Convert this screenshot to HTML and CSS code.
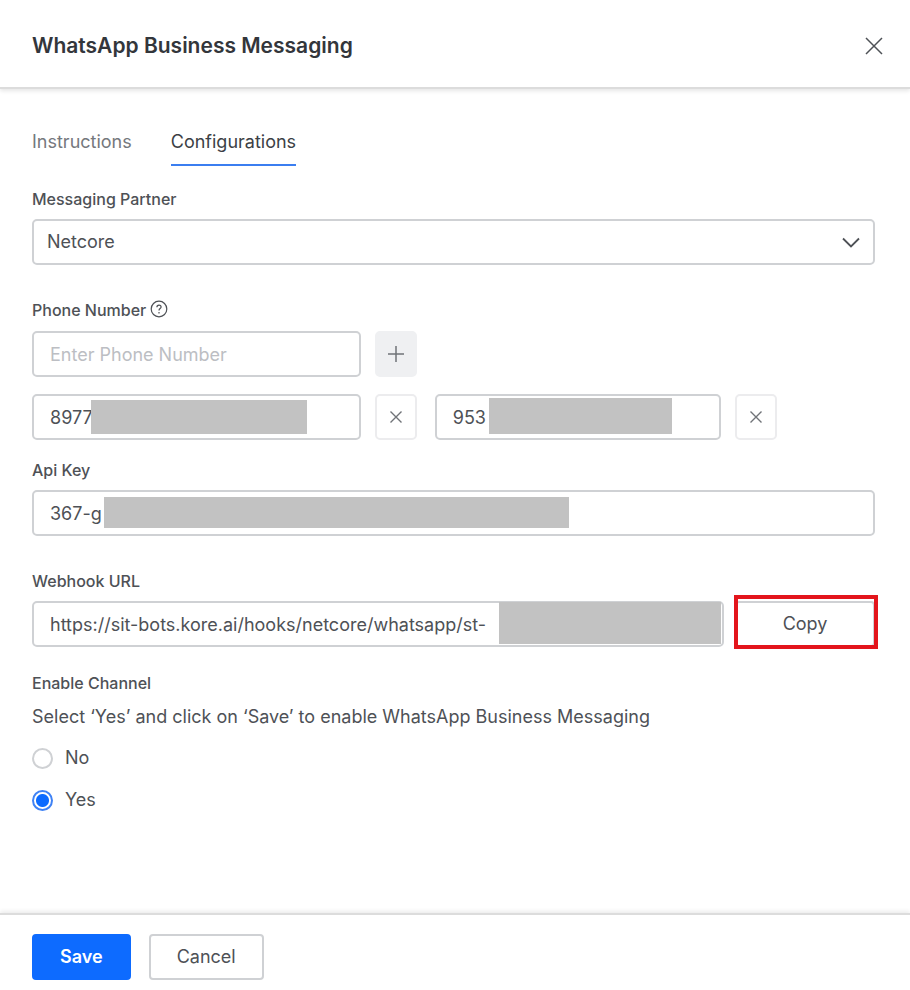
FILE: index.html
```
<!DOCTYPE html>
<html lang="en">
<head>
  <meta charset="UTF-8">
  <meta name="viewport" content="width=device-width, initial-scale=1.0">
  <title>WhatsApp Business Messaging</title>
  <link rel="stylesheet" href="styles.css">
</head>
<body>
  <div class="panel">
    <header class="header">
      <h1 class="title">WhatsApp Business Messaging</h1>
      <button class="close" type="button" aria-label="Close">
        <svg width="18" height="18" viewBox="0 0 18 18" fill="none" stroke="currentColor" stroke-width="1.5">
          <path d="M1 1l16 16M17 1L1 17"/>
        </svg>
      </button>
    </header>

    <main class="content">
      <nav class="tabs">
        <a class="tab" href="#instructions">Instructions</a>
        <a class="tab active" href="#configurations">Configurations</a>
      </nav>

      <div class="group">
        <label class="label" for="partner">Messaging Partner</label>
        <div class="field">
          <select class="input select" id="partner">
            <option>Netcore</option>
          </select>
          <svg class="chevron" width="18" height="12" viewBox="0 0 18 12" fill="none" stroke="currentColor" stroke-width="1.8">
            <path d="M1 1.5l8 8 8-8"/>
          </svg>
        </div>
      </div>

      <div class="group phones">
        <div class="label-row">
          <label class="label" for="phone">Phone Number</label>
          <svg class="help" width="18" height="18" viewBox="0 0 18 18" fill="none" stroke="currentColor" stroke-width="1.2">
            <circle cx="9" cy="9" r="7.8"/>
            <path d="M6.9 7.2c0-1.3.9-2.1 2.1-2.1s2.1.8 2.1 1.9c0 1.6-2.1 1.6-2.1 3.4M9 12v1.4"/>
          </svg>
        </div>
        <div class="row">
          <div class="field first">
            <input class="input" id="phone" type="text" placeholder="Enter Phone Number">
          </div>
          <button class="icon-btn add" type="button" aria-label="Add phone number">
            <svg width="16" height="16" viewBox="0 0 16 16" fill="none" stroke="currentColor" stroke-width="1.5">
              <path d="M8 0v16M0 8h16"/>
            </svg>
          </button>
        </div>
        <div class="row numbers">
          <div class="field first">
            <input class="input" type="text" value="8977" aria-label="Phone number 1">
            <span class="mask mask-phone1"></span>
          </div>
          <button class="icon-btn" type="button" aria-label="Remove phone number 1">
            <svg width="12" height="12" viewBox="0 0 12 12" fill="none" stroke="currentColor" stroke-width="1.4">
              <path d="M.5 .5l11 11M11.5 .5l-11 11"/>
            </svg>
          </button>
          <div class="field second">
            <input class="input" type="text" value="953" aria-label="Phone number 2">
            <span class="mask mask-phone2"></span>
          </div>
          <button class="icon-btn" type="button" aria-label="Remove phone number 2">
            <svg width="12" height="12" viewBox="0 0 12 12" fill="none" stroke="currentColor" stroke-width="1.4">
              <path d="M.5 .5l11 11M11.5 .5l-11 11"/>
            </svg>
          </button>
        </div>
      </div>

      <div class="group">
        <label class="label" for="api-key">Api Key</label>
        <div class="field">
          <input class="input" id="api-key" type="text" value="367-g">
          <span class="mask mask-key"></span>
        </div>
      </div>

      <div class="group webhook">
        <label class="label" for="webhook">Webhook URL</label>
        <div class="row">
          <div class="field grow">
            <input class="input" id="webhook" type="text" value="https://sit-bots.kore.ai/hooks/netcore/whatsapp/st-" readonly>
            <span class="mask mask-url"></span>
          </div>
          <button class="btn copy" type="button">Copy</button>
        </div>
      </div>

      <fieldset class="channel">
        <legend class="label">Enable Channel</legend>
        <p class="hint">Select ‘Yes’ and click on ‘Save’ to enable WhatsApp Business Messaging</p>
        <label class="option"><input class="radio" type="radio" name="channel" value="no">No</label>
        <label class="option"><input class="radio" type="radio" name="channel" value="yes" checked>Yes</label>
      </fieldset>
    </main>

    <footer class="footer">
      <button class="btn primary" type="button">Save</button>
      <button class="btn" type="button">Cancel</button>
    </footer>
  </div>
</body>
</html>
```
FILE: styles.css
```
* {
  box-sizing: border-box;
}

body {
  margin: 0;
  background: #fff;
  color: #4e5156;
  font-family: Inter, "Liberation Sans", sans-serif;
  font-size: 18px;
  line-height: 24px;
}

button,
input,
select {
  font: inherit;
  color: inherit;
}

.panel {
  min-height: 100vh;
  display: flex;
  flex-direction: column;
}

.header {
  display: flex;
  justify-content: space-between;
  align-items: center;
  padding: 33px 27px 28px 32px;
  border-bottom: 2px solid #dcdcdc;
  box-shadow: 0 2px 4px rgba(0, 0, 0, 0.1);
}

.title {
  margin: 0;
  font-size: 21px;
  font-weight: 600;
  line-height: 26px;
  color: #33363b;
}

.close {
  display: flex;
  padding: 0;
  border: 0;
  background: none;
  width: 18px;
}

.content {
  flex: 1;
  padding: 41px 35px 20px 32px;
}

.tabs {
  display: flex;
  gap: 39px;
  margin-bottom: 23px;
}

.tab {
  padding-bottom: 10px;
  border-bottom: 2px solid transparent;
  color: #75787d;
  text-decoration: none;
}

.tab.active {
  color: #3c3f45;
  border-color: #3b7ef0;
}

.group {
  display: flex;
  flex-direction: column;
  gap: 10px;
  margin-bottom: 35px;
}

.group.phones {
  gap: 11px;
  margin-bottom: 20px;
}

.group.webhook {
  margin-bottom: 26px;
}

.label {
  padding: 0;
  font-size: 16px;
  font-weight: 500;
  line-height: 20px;
}

.label-row {
  display: flex;
  gap: 4px;
}

.row {
  display: flex;
  gap: 14px;
}

.numbers {
  margin-top: 6px;
}

.field {
  position: relative;
}

.first {
  width: 39%;
}

.second {
  width: 34%;
  margin-left: 4px;
}

.grow {
  flex: 1;
}

.input {
  display: block;
  width: 100%;
  height: 46px;
  padding: 0 16px;
  border: 2px solid #cfd1d4;
  border-radius: 5px;
  background: #fff;
}

.input::placeholder {
  color: #bcbec3;
  opacity: 1;
}

.select {
  appearance: none;
  padding: 0 13px;
}

.chevron {
  position: absolute;
  top: 18px;
  right: 15px;
  pointer-events: none;
}

.mask {
  position: absolute;
  background: #c2c2c2;
}

.mask-phone1 {
  top: 6px;
  bottom: 6px;
  left: 59px;
  width: 216px;
}

.mask-phone2 {
  top: 4px;
  bottom: 6px;
  left: 54px;
  width: 183px;
}

.mask-key {
  top: 7px;
  bottom: 8px;
  left: 72px;
  width: 465px;
}

.mask-url {
  top: 1px;
  bottom: 3px;
  right: 3px;
  width: 222px;
}

.icon-btn {
  display: flex;
  align-items: center;
  justify-content: center;
  width: 42px;
  height: 46px;
  padding: 0;
  border: 2px solid #ececee;
  border-radius: 5px;
  background: #fff;
  color: #707378;
}

.icon-btn.add {
  border-color: #eff0f2;
  background: #eff0f2;
}

.btn {
  height: 46px;
  padding: 0 26px;
  border: 2px solid #cfd1d4;
  border-radius: 4px;
  background: #fff;
}

.btn.primary {
  border-color: #0d6bff;
  background: #0d6bff;
  color: #fff;
  font-weight: 600;
}

.btn.copy {
  position: relative;
  width: 140px;
}

/* highlight frame around the copy button */
.btn.copy::after {
  content: "";
  position: absolute;
  inset: -8px -5px -4px -3px;
  border: 4px solid #e3151c;
}

.webhook .row {
  gap: 11px;
}

.channel {
  margin: 0;
  padding: 0;
  border: 0;
}

.hint {
  margin: 12px 0 17px;
}

.option {
  display: flex;
  align-items: center;
  gap: 12px;
  margin-bottom: 18px;
}

.radio {
  appearance: none;
  width: 21px;
  height: 21px;
  margin: 0;
  border: 2px solid #cfd1d4;
  border-radius: 50%;
}

.radio:checked {
  border-color: #3f82f5;
  background: radial-gradient(circle, #0d6bff 6px, #fff 7px);
}

.footer {
  display: flex;
  gap: 18px;
  padding: 19px 32px 10px;
  border-top: 2px solid #dcdcdc;
  box-shadow: 0 -2px 4px rgba(0, 0, 0, 0.08);
}
```
